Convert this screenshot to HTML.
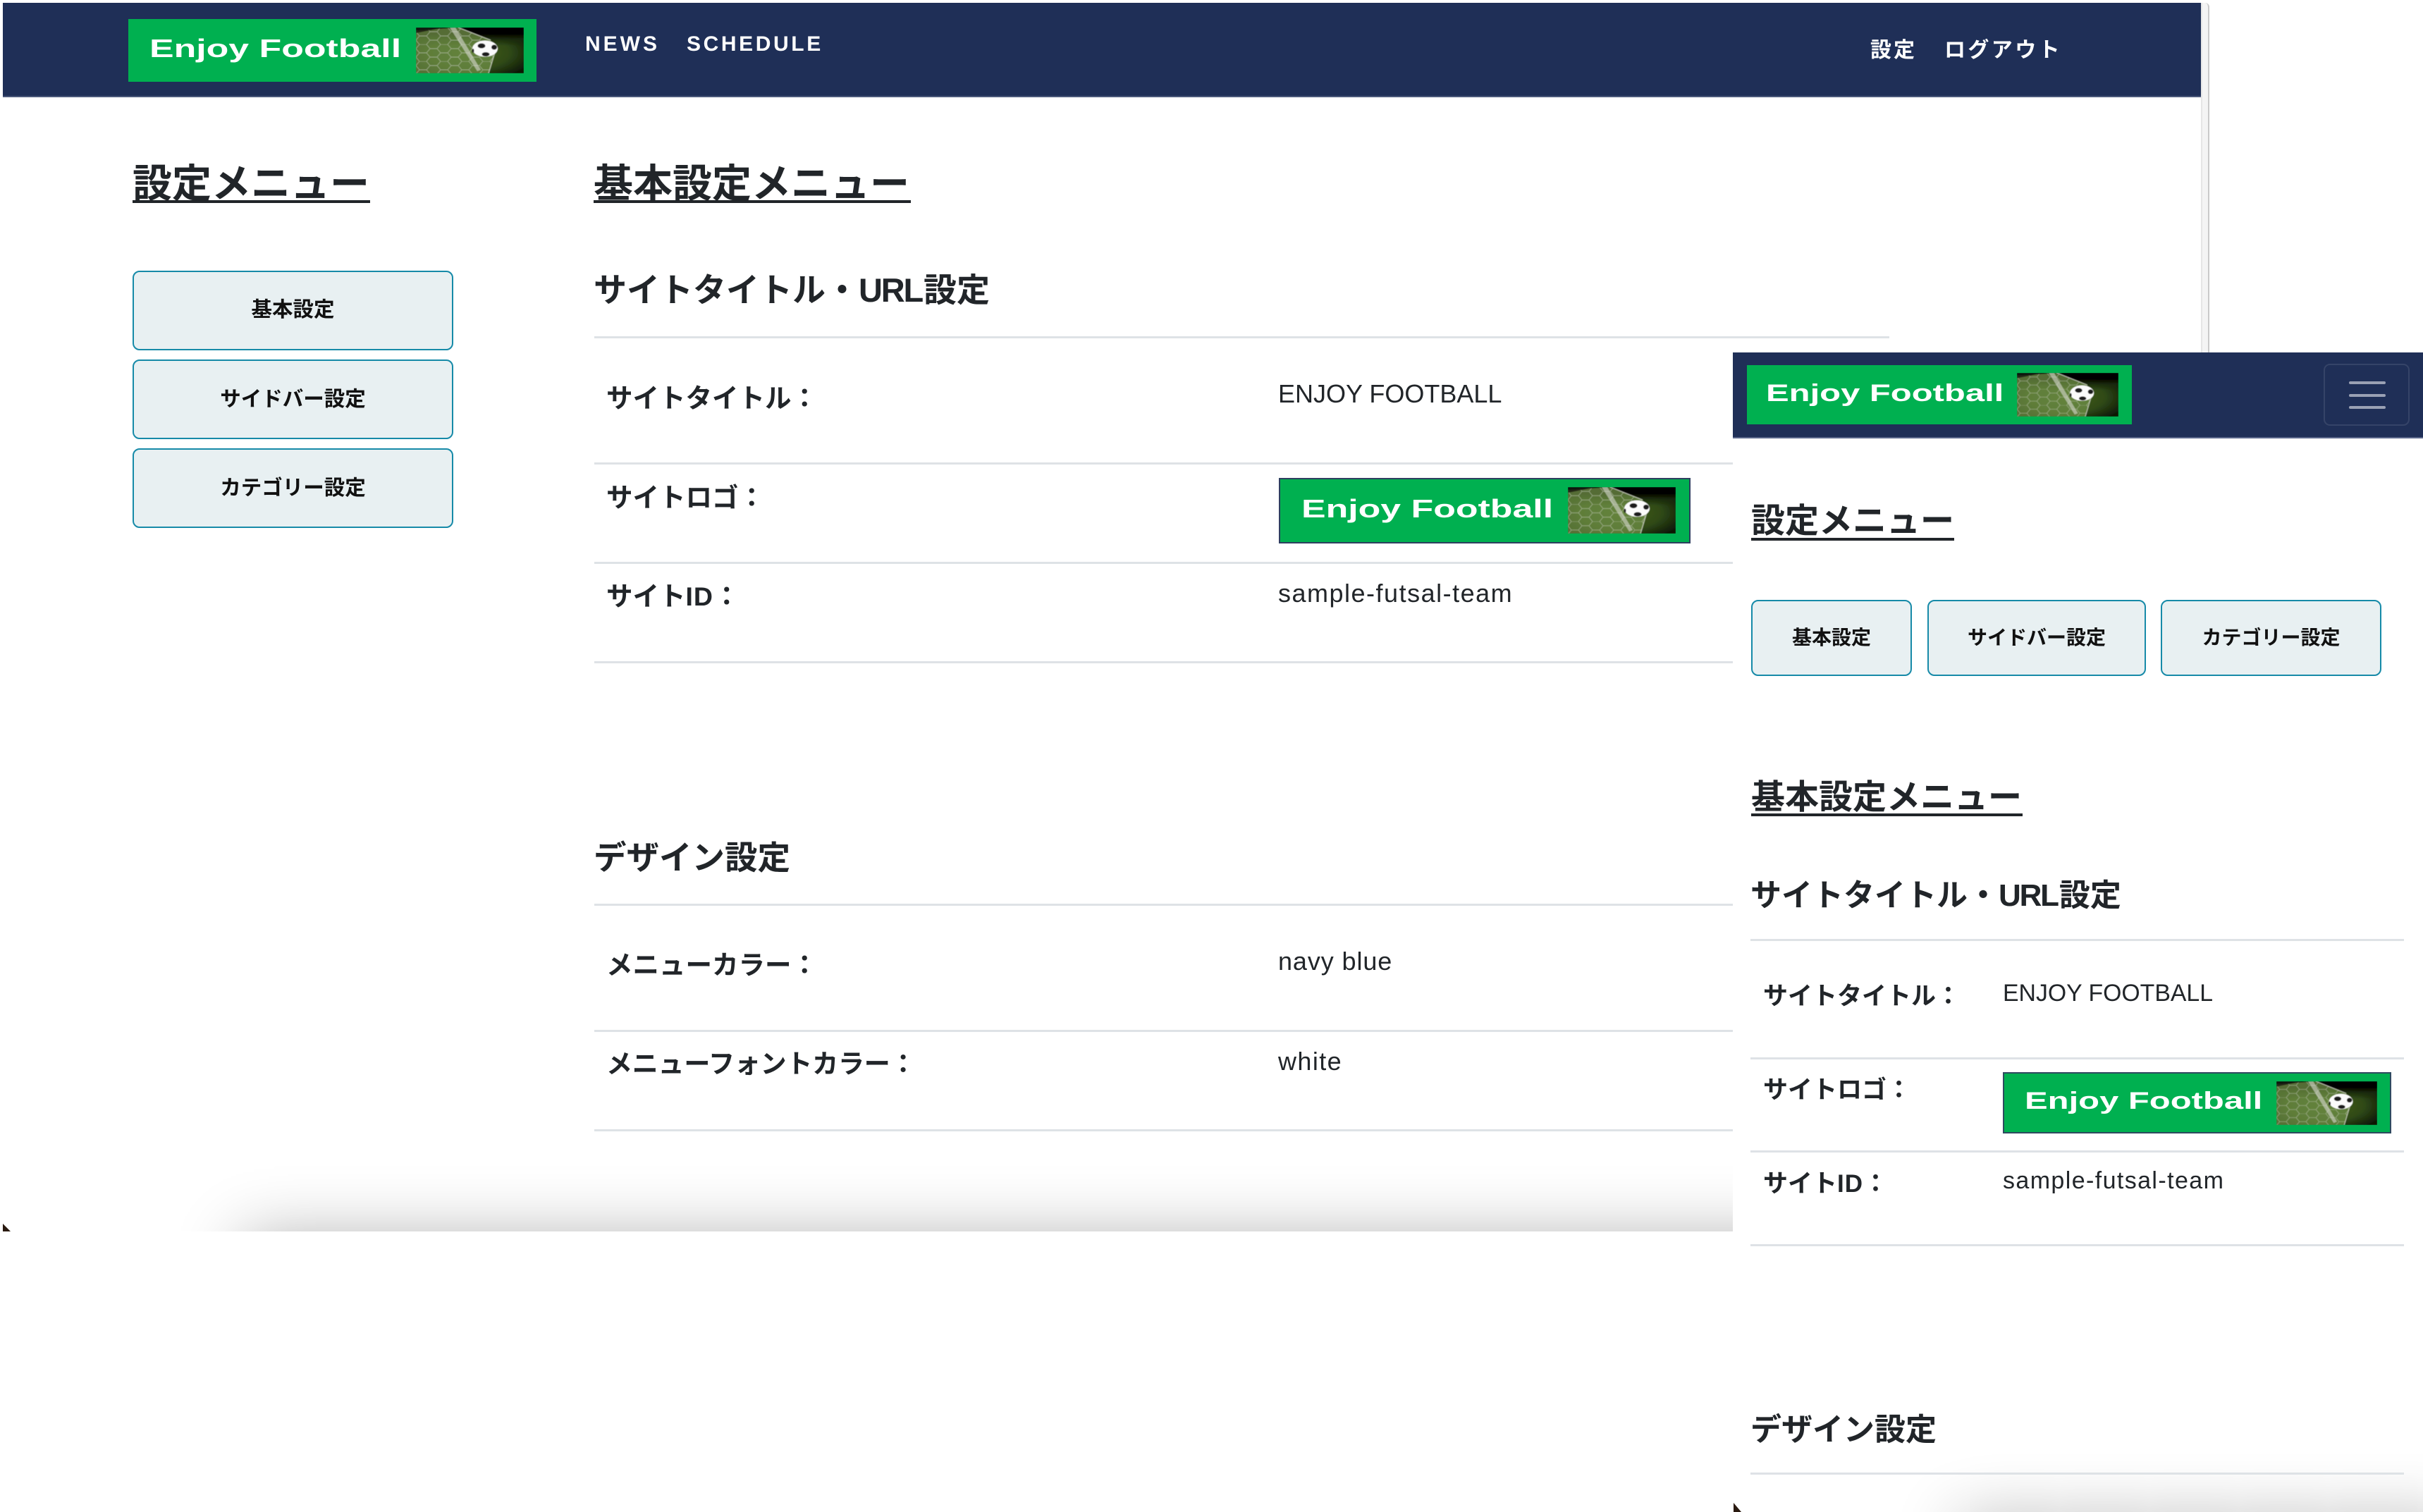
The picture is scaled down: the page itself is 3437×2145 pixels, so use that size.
<!DOCTYPE html>
<html lang="ja"><head><meta charset="utf-8"><title>設定メニュー</title>
<style>
html,body{margin:0;padding:0;background:#fff;width:3437px;height:2145px;overflow:hidden}
body{font-family:"Liberation Sans","Noto Sans CJK JP",sans-serif;color:#212529}
#p{position:relative;width:3437px;height:2145px;overflow:hidden}
.a{position:absolute;white-space:nowrap}
.b{font-weight:700}
.nav{background:#1f2f57;border-bottom:2px solid #4a577a;box-sizing:border-box}
.navt{color:#fff;font-weight:700;font-size:30px;line-height:40px;height:40px}
.logo{background:#00b050;box-sizing:border-box}
.logot{color:#fff;font-weight:700;transform-origin:0 50%;transform:scaleX(1.44)}
.btn{position:absolute;box-sizing:border-box;background:#e8f0f2;border:2.5px solid #168aa8;border-radius:10px;text-align:center;font-weight:700;color:#111;white-space:nowrap}
.ln{position:absolute;height:3px;background:#dee2e6}
.h2{position:absolute;white-space:nowrap;font-weight:700;border-bottom:4px solid #212529;box-sizing:border-box}
.h3{position:absolute;white-space:nowrap;font-weight:700}
.u{letter-spacing:-2.2px;margin-right:2px}
.i{letter-spacing:1px}
svg.f{position:absolute;display:block}
</style></head>
<body>
<div id="p">
<svg width="0" height="0" style="position:absolute">
<defs>
<radialGradient id="gr" cx="50%" cy="55%" r="62%"><stop offset="0" stop-color="#46621f"/><stop offset=".6" stop-color="#2f4917"/><stop offset="1" stop-color="#0d1605"/></radialGradient>
<linearGradient id="top" x1="0" y1="0" x2="0" y2="1"><stop offset="0" stop-color="#030300"/><stop offset=".15" stop-color="#050600"/><stop offset=".27" stop-color="#1a2a0a" stop-opacity=".8"/><stop offset=".4" stop-color="#1a2a0a" stop-opacity="0"/></linearGradient>
<pattern id="hex" width="30" height="24" patternUnits="userSpaceOnUse"><path d="M0 6L5 0H15L20 6L15 12H5ZM20 6H30M15 12L20 18H30M20 18L15 24M5 12L0 18M5 24L0 18" fill="none" stroke="#c3cbb6" stroke-width=".9" opacity=".6"/></pattern>
<filter id="bl"><feGaussianBlur stdDeviation=".45"/></filter>
<symbol id="ft" viewBox="0 0 153 65" preserveAspectRatio="none">
<g filter="url(#bl)">
<rect width="153" height="65" fill="url(#gr)"/>
<rect width="153" height="65" fill="url(#top)"/>
<path d="M0 4L60 0L106 18L113 32L103 65H0Z" fill="#6f8f45" opacity=".75"/>
<path d="M0 4L60 0L106 18L113 32L103 65H0Z" fill="url(#hex)"/>
<path d="M0 0H40L0 8Z" fill="#15170f" opacity=".8"/>
<path d="M48 0L56 0L92 60L87 62Z" fill="#d7d8d0" opacity=".6"/>
<path d="M60 0L106 18M113 32L103 65" stroke="#e4e6dc" stroke-width="1.3" fill="none" opacity=".7"/>
<ellipse cx="98" cy="30" rx="18" ry="11.5" fill="#fbfbfb"/>
<ellipse cx="93" cy="26" rx="5.5" ry="3.5" fill="#1b1b1b"/>
<ellipse cx="111" cy="28" rx="4" ry="3.5" fill="#1b1b1b"/>
<ellipse cx="99" cy="38" rx="5.5" ry="3" fill="#1b1b1b"/>
<ellipse cx="81" cy="33" rx="1.5" ry="3" fill="#222"/>
</g>
</symbol>
</defs>
</svg>

<!-- gutter -->
<div class="a" style="left:3122px;top:4px;width:12px;height:500px;background:#f4f4f4;border-left:2px solid #e6e6e6;border-right:2px solid #c9c9c9;box-sizing:border-box;border-top-right-radius:6px"></div>

<!-- left window -->
<div class="a nav" style="left:4px;top:4px;width:3118px;height:134px"></div>
<div class="a logo" style="left:182px;top:27px;width:579px;height:89px"></div>
<div class="a logot" style="left:212px;top:47px;font-size:36px;line-height:44px">Enjoy Football</div>
<svg class="f" style="left:590px;top:39px" width="153" height="65"><use href="#ft" width="153" height="65"/></svg>
<div class="a navt" style="left:830px;top:43px;letter-spacing:4px">NEWS</div>
<div class="a navt" style="left:974px;top:43px;letter-spacing:3.6px">SCHEDULE</div>
<div class="a navt" style="left:2653px;top:52px;letter-spacing:3px">設定</div>
<div class="a navt" style="left:2758px;top:52px;letter-spacing:3.4px">ログアウト</div>

<div class="h2" style="left:188px;top:224px;width:337px;height:64px;font-size:56px;line-height:74px">設定メニュー</div>
<div class="h2" style="left:842px;top:224px;width:450px;height:64px;font-size:56px;line-height:74px">基本設定メニュー</div>

<div class="btn" style="left:188px;top:384px;width:455px;height:113px;font-size:29.5px;line-height:108px">基本設定</div>
<div class="btn" style="left:188px;top:510px;width:455px;height:113px;font-size:29.5px;line-height:109px">サイドバー設定</div>
<div class="btn" style="left:188px;top:636px;width:455px;height:113px;font-size:29.5px;line-height:110px">カテゴリー設定</div>

<div class="h3" style="left:842px;top:382px;font-size:47px;line-height:60px">サイトタイトル・<span class="u">URL</span>設定</div>
<div class="ln" style="left:843px;top:477px;width:1837px"></div>
<div class="a b" style="left:860px;top:540px;font-size:37.5px;line-height:50px">サイトタイトル：</div>
<div class="a" style="left:1813px;top:534px;font-size:36px;line-height:50px">ENJOY FOOTBALL</div>
<div class="ln" style="left:843px;top:656px;width:1615px"></div>
<div class="a b" style="left:860px;top:681px;font-size:37.5px;line-height:50px">サイトロゴ：</div>
<div class="a logo" style="left:1814px;top:678px;width:584px;height:93px;border:2px solid #2f3f60"></div>
<div class="a logot" style="left:1846px;top:700px;font-size:36px;line-height:44px">Enjoy Football</div>
<svg class="f" style="left:2224px;top:691px" width="153" height="66"><use href="#ft" width="153" height="66"/></svg>
<div class="ln" style="left:843px;top:797px;width:1615px"></div>
<div class="a b" style="left:860px;top:821px;font-size:37.5px;line-height:50px">サイト<span class="i">ID</span>：</div>
<div class="a" style="left:1813px;top:817px;font-size:36px;line-height:50px;letter-spacing:1.5px">sample-futsal-team</div>
<div class="ln" style="left:843px;top:938px;width:1615px"></div>

<div class="h3" style="left:842px;top:1187px;font-size:46.5px;line-height:60px">デザイン設定</div>
<div class="ln" style="left:843px;top:1282px;width:1615px"></div>
<div class="a b" style="left:860px;top:1344px;font-size:37.5px;line-height:50px">メニューカラー：</div>
<div class="a" style="left:1813px;top:1339px;font-size:36px;line-height:50px;letter-spacing:.9px">navy blue</div>
<div class="ln" style="left:843px;top:1461px;width:1615px"></div>
<div class="a b" style="left:860px;top:1485px;font-size:37px;line-height:50px;letter-spacing:-.2px">メニューフォントカラー：</div>
<div class="a" style="left:1813px;top:1481px;font-size:36px;line-height:50px;letter-spacing:1.4px">white</div>
<div class="ln" style="left:843px;top:1602px;width:1615px"></div>

<!-- left shadow -->
<div class="a" style="left:0;top:1600px;width:2458px;height:147px;overflow:hidden">
<div style="position:absolute;left:345px;top:157px;width:3000px;height:300px;box-shadow:0 0 90px rgba(0,0,0,.32)"></div>
<div style="position:absolute;left:4px;top:136px;width:0;height:0;border-left:11px solid #2a1a10;border-top:11px solid transparent"></div>
</div>

<!-- right window -->
<div class="a" style="left:2458px;top:500px;width:979px;height:1645px;background:#fff;overflow:hidden">
<div class="a nav" style="left:0;top:0;width:979px;height:122px;border-bottom-color:#5a668a"></div>
</div>
<div class="a logo" style="left:2478px;top:518px;width:546px;height:84px"></div>
<div class="a logot" style="left:2505px;top:537px;font-size:34px;line-height:42px">Enjoy Football</div>
<svg class="f" style="left:2861px;top:529px" width="144" height="62"><use href="#ft" width="144" height="62"/></svg>
<div class="a" style="left:3296px;top:516px;width:122px;height:88px;box-sizing:border-box;border:2.5px solid rgba(255,255,255,.1);border-radius:9px"></div>
<div class="a" style="left:3332px;top:541px;width:52px;height:3.5px;background:#9aa1b4;border-radius:2px"></div>
<div class="a" style="left:3332px;top:559px;width:52px;height:3.5px;background:#9aa1b4;border-radius:2px"></div>
<div class="a" style="left:3332px;top:576px;width:52px;height:3.5px;background:#9aa1b4;border-radius:2px"></div>

<div class="h2" style="left:2484px;top:704px;width:288px;height:63px;font-size:48px;line-height:72px">設定メニュー</div>
<div class="btn" style="left:2484px;top:851px;width:228px;height:108px;font-size:28px;line-height:104px">基本設定</div>
<div class="btn" style="left:2734px;top:851px;width:310px;height:108px;font-size:28px;line-height:104px">サイドバー設定</div>
<div class="btn" style="left:3065px;top:851px;width:313px;height:108px;font-size:28px;line-height:104px">カテゴリー設定</div>
<div class="h2" style="left:2484px;top:1097px;width:385px;height:61px;font-size:48px;line-height:70px">基本設定メニュー</div>

<div class="h3" style="left:2483px;top:1241px;font-size:44px;line-height:60px">サイトタイトル・<span class="u">URL</span>設定</div>
<div class="ln" style="left:2483px;top:1332px;width:927px"></div>
<div class="a b" style="left:2501px;top:1390px;font-size:35px;line-height:48px">サイトタイトル：</div>
<div class="a" style="left:2841px;top:1385px;font-size:33.8px;line-height:48px">ENJOY FOOTBALL</div>
<div class="ln" style="left:2483px;top:1500px;width:927px"></div>
<div class="a b" style="left:2501px;top:1523px;font-size:35px;line-height:48px">サイトロゴ：</div>
<div class="a logo" style="left:2841px;top:1521px;width:551px;height:87px;border:2px solid #2f4a60"></div>
<div class="a logot" style="left:2872px;top:1541px;font-size:34px;line-height:42px">Enjoy Football</div>
<svg class="f" style="left:3229px;top:1534px" width="143" height="62"><use href="#ft" width="143" height="62"/></svg>
<div class="ln" style="left:2483px;top:1632px;width:927px"></div>
<div class="a b" style="left:2501px;top:1656px;font-size:35px;line-height:48px">サイト<span class="i">ID</span>：</div>
<div class="a" style="left:2841px;top:1651px;font-size:34px;line-height:48px;letter-spacing:1.4px">sample-futsal-team</div>
<div class="ln" style="left:2483px;top:1765px;width:927px"></div>

<div class="h3" style="left:2483px;top:1999px;font-size:44px;line-height:60px">デザイン設定</div>

<!-- right shadow: source box sits off to the left of the clip so nothing exceeds the frame -->
<div class="a" style="left:2458px;top:2000px;width:979px;height:145px;overflow:hidden">
<div style="position:absolute;left:-1100px;top:0;width:1000px;height:145px;box-shadow:1420px 156px 90px rgba(0,0,0,.32)"></div>
<div style="position:absolute;left:1px;top:132px;width:0;height:0;border-left:11px solid #2a1a10;border-top:13px solid transparent"></div>
</div>
<div class="ln" style="left:2483px;top:2089px;width:927px"></div>
</div>
</body></html>
